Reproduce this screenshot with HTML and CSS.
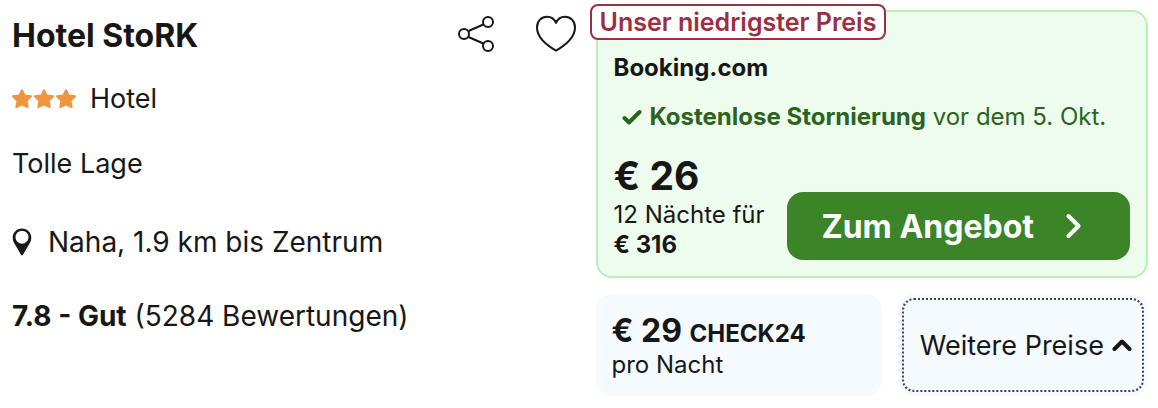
FILE: index.html
```html
<!DOCTYPE html>
<html lang="de">
<head>
  <meta charset="UTF-8" />
  <meta name="viewport" content="width=device-width, initial-scale=1.0" />
  <title>Hotel StoRK</title>
  <link rel="stylesheet" href="styles.css">
</head>
<body>
  <article class="hotel">
    <section class="info">
      <header class="info-header">
        <h2 class="hotel-name">Hotel StoRK</h2>
        <div class="actions">
          <button type="button" class="icon-btn" aria-label="Teilen">
            <svg width="40" height="40" viewBox="0 0 40 40" fill="none" stroke="#171717" stroke-width="2">
              <circle cx="8" cy="20" r="5" />
              <circle cx="32" cy="8" r="5" />
              <circle cx="32" cy="32" r="5" />
              <path d="M12.500 17L27.300 10.500M12.500 23L27.300 29.500" />
            </svg>
          </button>
          <button type="button" class="icon-btn" aria-label="Merken">
            <svg width="40" height="40" viewBox="0 0 40 40" fill="none" stroke="#171717" stroke-width="2" stroke-linejoin="round">
              <path d="M20 36.700C12 32 1 23.500 1 13.500C1 7 5.500 2.700 11 2.700C15 2.700 18.500 5 20 9C21.500 5 25 2.700 29 2.700C34.500 2.700 39 7 39 13.500C39 23.500 28 32 20 36.700Z" />
            </svg>
          </button>
        </div>
      </header>
      <p class="category">
        <svg class="stars" width="64" height="20" viewBox="0 0 64 20" fill="#f0953f" stroke="#f0953f" stroke-width="2" stroke-linejoin="round">
          <path id="star" d="M10 1.200L12.700 6.600L19 7.300L14.600 11.900L15.700 18.200L10 15.300L4.300 18.200L5.400 11.900L1 7.300L7.300 6.600Z" />
          <use href="#star" x="22" />
          <use href="#star" x="44" />
        </svg>
        Hotel
      </p>
      <p class="highlight">Tolle Lage</p>
      <p class="location">
        <svg width="20" height="28" viewBox="0 0 20 28">
          <path fill="#171717" fill-rule="evenodd" d="M10 0.500C4.800 0.500 0.700 4.600 0.700 9.700C0.700 12.500 1.800 14.500 3 16.500L9.200 27C9.500 27.500 10.500 27.500 10.800 27L17 16.500C18.200 14.500 19.300 12.500 19.300 9.700C19.300 4.600 15.200 0.500 10 0.500ZM10 2.700A6.500 6.500 0 1 1 10 15.700A6.500 6.500 0 1 1 10 2.700Z" />
        </svg>
        Naha, 1.9 km bis Zentrum
      </p>
      <p class="rating"><strong>7.8 - Gut</strong> (5284 Bewertungen)</p>
    </section>

    <section class="prices">
      <div class="offer">
        <span class="badge">Unser niedrigster Preis</span>
        <h3 class="provider">Booking.com</h3>
        <p class="cancellation">
          <svg width="20" height="18" viewBox="0 0 20 18" fill="none" stroke="#2b6420" stroke-width="4" stroke-linecap="round" stroke-linejoin="round">
            <path d="M2.500 10L7 14.500L17.500 4" />
          </svg>
          <span><strong>Kostenlose Stornierung</strong> vor dem 5. Okt.</span>
        </p>
        <div class="offer-bottom">
          <div class="offer-price">
            <p class="price">€ 26</p>
            <p class="nights">12 Nächte für</p>
            <p class="total">€ 316</p>
          </div>
          <button type="button" class="deal-btn">
            Zum Angebot
            <svg width="16" height="26" viewBox="0 0 16 26" fill="none" stroke="#fff" stroke-width="4" stroke-linecap="round" stroke-linejoin="round">
              <path d="M2.500 3L12.500 13L2.500 23" />
            </svg>
          </button>
        </div>
      </div>
      <div class="alternatives">
        <div class="alt-offer">
          <p class="alt-price">€ 29 <span class="alt-provider">CHECK24</span></p>
          <p class="per-night">pro Nacht</p>
        </div>
        <button type="button" class="more-btn">
          Weitere Preise
          <svg width="20" height="14" viewBox="0 0 20 14" fill="none" stroke="#171717" stroke-width="4" stroke-linecap="round" stroke-linejoin="round">
            <path d="M2.500 11L10 3.500L17.500 11" />
          </svg>
        </button>
      </div>
    </section>
  </article>
</body>
</html>
```
FILE: styles.css
```css
* {
  box-sizing: border-box;
}

body {
  margin: 0;
  background-color: #fff;
  color: #171717;
  font-family: Inter, "Liberation Sans", sans-serif;
  font-size: 27px;
  line-height: 32px;
}

h2,
h3,
p {
  margin: 0;
}

button {
  font-family: inherit;
  color: inherit;
  border: none;
  cursor: pointer;
}

svg {
  flex-shrink: 0;
}

.hotel {
  display: grid;
  grid-template-columns: 1.02fr 1fr;
  gap: 20px;
  padding: 10px 10px 12px 12px;
}

.info {
  display: flex;
  flex-direction: column;
}

.info-header {
  display: flex;
  justify-content: space-between;
  align-items: center;
  height: 48px;
}

.hotel-name {
  padding-top: 3px;
  font-size: 32px;
  font-weight: 700;
}

.actions {
  display: flex;
  gap: 40px;
}

.icon-btn {
  display: flex;
  padding: 0;
  background: none;
}

.category {
  display: flex;
  align-items: center;
  gap: 14px;
  margin-top: 25px;
}

.highlight {
  margin-top: 33px;
}

.location {
  display: flex;
  align-items: center;
  gap: 16px;
  margin-top: 46px;
  font-size: 28px;
}

.rating {
  margin-top: 42px;
  font-size: 28px;
}

.offer {
  position: relative;
  padding: 40px 16px 16px;
  background-color: #edfcec;
  border: 2px solid #bdedb9;
  border-radius: 16px;
}

.badge {
  position: absolute;
  top: -8px;
  left: -8px;
  padding: 0 8px;
  background-color: #fff;
  border: 2px solid #9b2f42;
  border-radius: 8px;
  color: #9b2f42;
  font-size: 25px;
  font-weight: 600;
  white-space: nowrap;
}

.provider {
  font-size: 24px;
  font-weight: 700;
}

.cancellation {
  display: flex;
  align-items: center;
  gap: 8px;
  margin-top: 17px;
  padding-left: 8px;
  color: #2b6420;
  font-size: 24px;
  white-space: nowrap;
}

.offer-bottom {
  display: flex;
  justify-content: space-between;
  align-items: flex-end;
  margin-top: 19px;
}

.offer-price {
  font-size: 24px;
  line-height: 30px;
}

.price {
  font-size: 39px;
  font-weight: 700;
  line-height: 48px;
}

.total {
  font-weight: 700;
}

.deal-btn {
  display: flex;
  align-items: center;
  gap: 32px;
  height: 68px;
  padding: 0 48px 0 34px;
  background-color: #3b8427;
  border-radius: 16px;
  color: #fff;
  font-size: 32px;
  font-weight: 700;
}

.alternatives {
  display: grid;
  grid-template-columns: 8fr 7fr;
  gap: 16px;
  margin-top: 16px;
}

.alt-offer {
  padding: 19px 16px 15px;
  background-color: #f5faff;
  border-radius: 16px;
}

.alt-price {
  font-size: 32px;
  font-weight: 700;
  line-height: 36px;
}

.alt-provider {
  font-size: 24px;
  line-height: 24px;
}

.per-night {
  font-size: 24px;
}

.more-btn {
  display: flex;
  align-items: center;
  justify-content: center;
  gap: 8px;
  padding: 0 10px 0 16px;
  background-color: #f5faff;
  border-radius: 16px;
  outline: 2px dotted #3d4650;
  outline-offset: -6px;
  font-size: 27px;
  white-space: nowrap;
}
```
